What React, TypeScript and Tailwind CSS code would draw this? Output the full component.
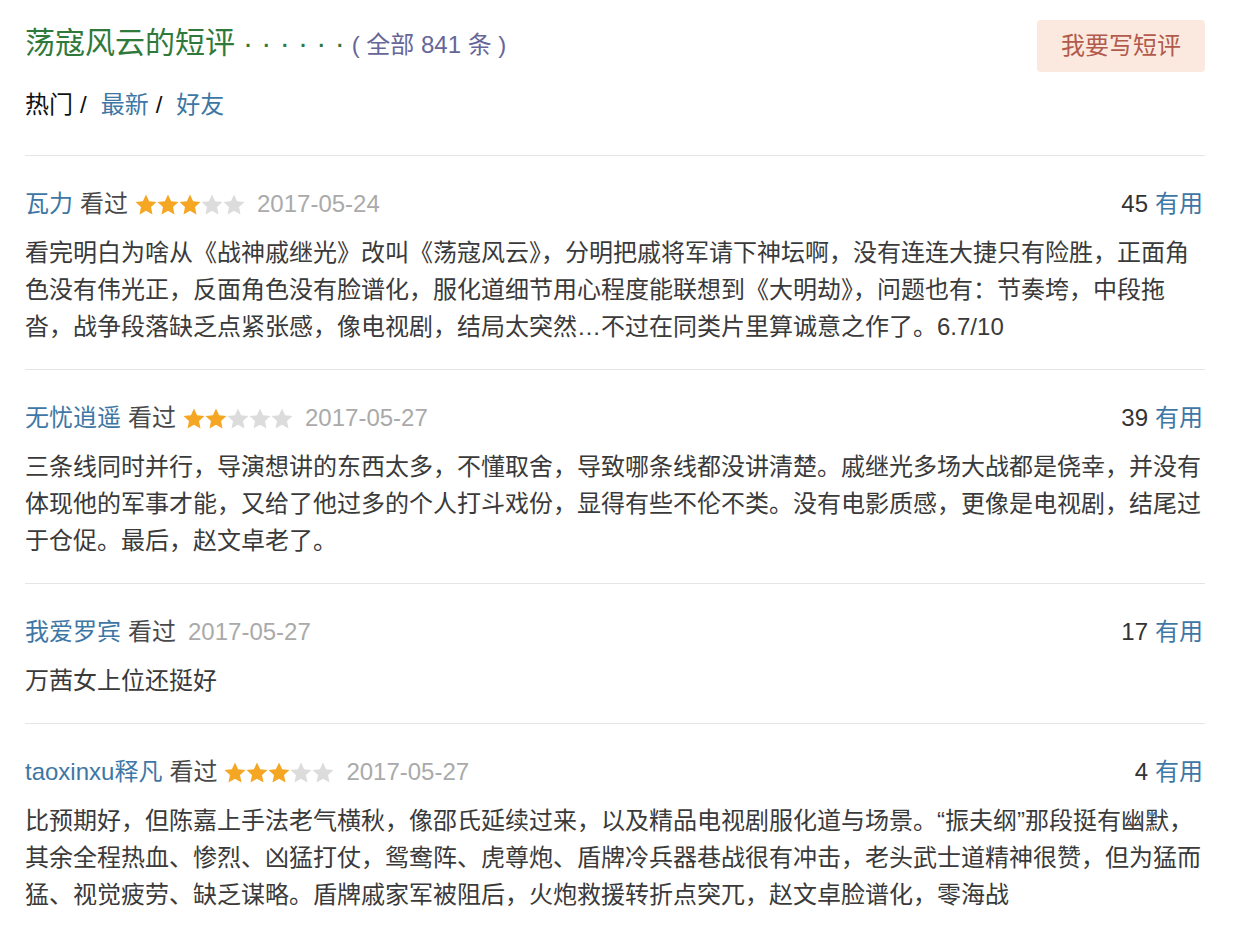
const font = {
  fontFamily: '"Liberation Sans", "Noto Sans CJK SC", sans-serif',
};

type Review = {
  user: string;
  stars: number;
  date: string;
  votes: number;
  text: string;
};

const reviews: Review[] = [
  {
    user: "瓦力",
    stars: 3,
    date: "2017-05-24",
    votes: 45,
    text: "看完明白为啥从《战神戚继光》改叫《荡寇风云》，分明把戚将军请下神坛啊，没有连连大捷只有险胜，正面角色没有伟光正，反面角色没有脸谱化，服化道细节用心程度能联想到《大明劫》，问题也有：节奏垮，中段拖沓，战争段落缺乏点紧张感，像电视剧，结局太突然…不过在同类片里算诚意之作了。6.7/10",
  },
  {
    user: "无忧逍遥",
    stars: 2,
    date: "2017-05-27",
    votes: 39,
    text: "三条线同时并行，导演想讲的东西太多，不懂取舍，导致哪条线都没讲清楚。戚继光多场大战都是侥幸，并没有体现他的军事才能，又给了他过多的个人打斗戏份，显得有些不伦不类。没有电影质感，更像是电视剧，结尾过于仓促。最后，赵文卓老了。",
  },
  {
    user: "我爱罗宾",
    stars: 0,
    date: "2017-05-27",
    votes: 17,
    text: "万茜女上位还挺好",
  },
  {
    user: "taoxinxu释凡",
    stars: 3,
    date: "2017-05-27",
    votes: 4,
    text: "比预期好，但陈嘉上手法老气横秋，像邵氏延续过来，以及精品电视剧服化道与场景。“振夫纲”那段挺有幽默，其余全程热血、惨烈、凶猛打仗，鸳鸯阵、虎尊炮、盾牌冷兵器巷战很有冲击，老头武士道精神很赞，但为猛而猛、视觉疲劳、缺乏谋略。盾牌戚家军被阻后，火炮救援转折点突兀，赵文卓脸谱化，零海战",
  },
];

const Star = ({ on }: { on: boolean }) => (
  <svg width="22" height="22" viewBox="1 1.5 22 21" className="inline-block">
    <polygon
      points="12,1.5 15.1,8.3 22.5,9.1 17,14.1 18.5,21.4 12,17.7 5.5,21.4 7,14.1 1.5,9.1 8.9,8.3"
      fill={on ? "#f5a623" : "#dcdcdc"}
    />
  </svg>
);

const Stars = ({ n }: { n: number }) => (
  <span className="inline-flex items-center mx-[7px] translate-y-[1px]">
    {[0, 1, 2, 3, 4].map((i) => (
      <Star key={i} on={i < n} />
    ))}
  </span>
);

export default function App() {
  return (
    <div className="w-[1256px] min-h-[934px] bg-white" style={font}>
      <div className="ml-[25px] w-[1180px]">
        <div className="flex justify-between items-start pt-[20px]">
          <div className="leading-[46px] flex items-baseline">
            <span className="text-[30px] text-[#2f7a3a]">荡寇风云的短评</span>
            <span className="text-[30px] text-[#2f7a3a] ml-[8px]">· · · · · ·</span>
            <span className="text-[24px] text-[#666699] ml-[7px]">( 全部 841 条 )</span>
          </div>
          <button className="h-[52px] w-[168px] rounded-[4px] bg-[#fbe9df] text-[24px] text-[#b25a4c]">
            我要写短评
          </button>
        </div>

        <div className="mt-[17px] text-[24px] leading-[32px]">
          <span className="text-[#111]">热门</span>
          <span className="text-[#111] ml-[7px]">/</span>
          <span className="text-[#3e77a5] ml-[14px]">最新</span>
          <span className="text-[#111] ml-[7px]">/</span>
          <span className="text-[#3e77a5] ml-[14px]">好友</span>
        </div>

        <div className="mt-[34px] border-t border-[#e5e5e5]">
          {reviews.map((r, i) => (
            <div
              key={i}
              className={
                i < reviews.length - 1
                  ? "pt-[32px] pb-[24px] border-b border-[#e5e5e5]"
                  : "pt-[32px] pb-[24px]"
              }
            >
              <div className="flex justify-between items-center h-[32px] text-[24px]">
                <div className="flex items-center whitespace-nowrap">
                  <span className="text-[#3e77a5]">{r.user}</span>
                  <span className="text-[#494949] ml-[7px]">看过</span>
                  {r.stars > 0 ? <Stars n={r.stars} /> : <span className="w-[7px]" />}
                  <span className="text-[#aaaaaa] ml-[5px]">{r.date}</span>
                </div>
                <div className="pr-[2px]">
                  <span className="text-[#333]">{r.votes}</span>
                  <span className="text-[#3e77a5] ml-[7px]">有用</span>
                </div>
              </div>
              <p className="mt-[14px] text-[24px] leading-[37px] text-[#3a3a3a]">
                {r.text}
              </p>
            </div>
          ))}
        </div>
      </div>
    </div>
  );
}
